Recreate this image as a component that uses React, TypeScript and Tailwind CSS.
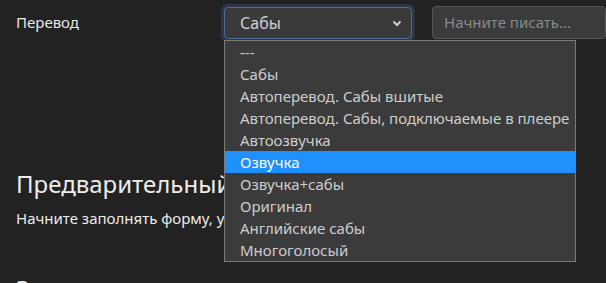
import React from "react";

const options = [
  "---",
  "Сабы",
  "Автоперевод. Сабы вшитые",
  "Автоперевод. Сабы, подключаемые в плеере",
  "Автоозвучка",
  "Озвучка",
  "Озвучка+сабы",
  "Оригинал",
  "Английские сабы",
  "Многоголосый",
];

export default function App() {
  return (
    <div
      className="relative h-[283px] w-[606px] overflow-hidden bg-[#222222] text-[#e6e6e6]"
      style={{ fontFamily: '"Noto Sans", "Open Sans", sans-serif' }}
    >
      <div className="flex items-center pt-[6px]">
        <div className="w-[224px] pl-[16px] text-[15px] text-[#e8e8e8]">Перевод</div>
        <div className="flex h-[32px] w-[188px] items-center justify-between rounded-[4px] border border-[#4d6c9b] bg-[#3a3a3a] pl-[15px] pr-[8px] text-[16px] text-[#cfcfcf] shadow-[0_0_0_3px_rgba(60,90,140,0.35)]">
          <span>Сабы</span>
          <svg width="12" height="12" viewBox="0 0 12 12">
            <path d="M2.5 4.5 L6 8 L9.5 4.5" fill="none" stroke="#d0d0d0" strokeWidth="2" />
          </svg>
        </div>
        <div className="ml-[20px] flex h-[33px] flex-1 items-center rounded-[4px] border border-[#555555] bg-[#3b3b3b] pl-[11px] text-[15px] text-[#8a8a8a]">
          Начните писать...
        </div>
      </div>

      <div className="pl-[16px] pt-[130px]">
        <h2 className="text-[24px] leading-[29px] text-[#ececec]">Предварительный просмотр</h2>
        <p className="mt-[10px] text-[15px] leading-[20px] text-[#ececec]">Начните заполнять форму, укажите название</p>
        <h2 className="mt-[46px] text-[24px] leading-[29px] text-[#ececec]">Заголовок</h2>
      </div>

      <div className="absolute left-[224px] top-[40px] w-[352px] border border-[#7a7a7a] bg-[#3b3b3b] text-[15px]">
        {options.map((o) => (
          <div
            key={o}
            className={
              o === "Озвучка"
                ? "h-[22px] bg-[#1e90ff] pl-[15px] leading-[22px] text-white"
                : "h-[22px] pl-[15px] leading-[22px] text-[#cdcdcd]"
            }
          >
            {o}
          </div>
        ))}
      </div>
    </div>
  );
}
